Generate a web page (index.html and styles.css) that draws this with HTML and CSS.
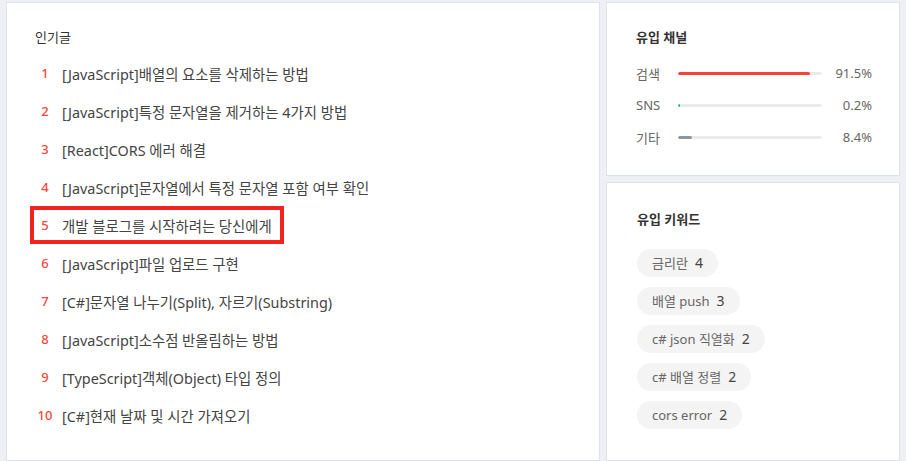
FILE: index.html
```html
<!DOCTYPE html>
<html lang="ko">
<head>
<meta charset="utf-8">
<link rel="stylesheet" href="styles.css">
</head>
<body>
<div class="page">
  <section class="panel popular">
    <h2 class="title">인기글</h2>
    <ol class="posts">
      <li class="post"><span class="rank">1</span><span class="name">[JavaScript]배열의 요소를 삭제하는 방법</span></li>
      <li class="post"><span class="rank">2</span><span class="name">[JavaScript]특정 문자열을 제거하는 4가지 방법</span></li>
      <li class="post"><span class="rank">3</span><span class="name">[React]CORS 에러 해결</span></li>
      <li class="post"><span class="rank">4</span><span class="name">[JavaScript]문자열에서 특정 문자열 포함 여부 확인</span></li>
      <li class="post hl"><span class="rank">5</span><span class="name">개발 블로그를 시작하려는 당신에게</span></li>
      <li class="post"><span class="rank">6</span><span class="name">[JavaScript]파일 업로드 구현</span></li>
      <li class="post"><span class="rank">7</span><span class="name">[C#]문자열 나누기(Split), 자르기(Substring)</span></li>
      <li class="post"><span class="rank">8</span><span class="name">[JavaScript]소수점 반올림하는 방법</span></li>
      <li class="post"><span class="rank">9</span><span class="name">[TypeScript]객체(Object) 타입 정의</span></li>
      <li class="post"><span class="rank">10</span><span class="name">[C#]현재 날짜 및 시간 가져오기</span></li>
    </ol>
  </section>
  <div class="side">
    <section class="panel channels">
      <h2 class="title strong">유입 채널</h2>
      <div class="channel">
        <span class="ch-label">검색</span>
        <div class="track"><div class="fill red" style="width:91.5%"></div></div>
        <span class="ch-value">91.5%</span>
      </div>
      <div class="channel">
        <span class="ch-label">SNS</span>
        <div class="track"><div class="fill teal" style="width:2px"></div></div>
        <span class="ch-value">0.2%</span>
      </div>
      <div class="channel">
        <span class="ch-label">기타</span>
        <div class="track"><div class="fill grey" style="width:9.5%"></div></div>
        <span class="ch-value">8.4%</span>
      </div>
    </section>
    <section class="panel keywords">
      <h2 class="title strong">유입 키워드</h2>
      <ul class="tags">
        <li class="tag">금리란<span class="cnt">4</span></li>
        <li class="tag">배열 push<span class="cnt">3</span></li>
        <li class="tag">c# json 직열화<span class="cnt">2</span></li>
        <li class="tag">c# 배열 정렬<span class="cnt">2</span></li>
        <li class="tag">cors error<span class="cnt">2</span></li>
      </ul>
    </section>
  </div>
</div>
</body>
</html>
```

FILE: styles.css
```css
* { box-sizing: border-box; }
html, body { margin: 0; padding: 0; }
body {
  background: #eef0f5;
  font-family: "Noto Sans", "Noto Sans CJK KR", sans-serif;
  color: #444;
}
.page {
  display: flex;
  gap: 6px;
  height: 461px;
  padding: 2px 6px 0 6px;
}
.panel {
  background: #fff;
  border: 1px solid #dde3ed;
}
.popular {
  width: 594px;
  padding: 24px 0 0 23px;
}
.title {
  margin: 0;
  font-size: 13px;
  font-weight: 400;
  line-height: 20px;
  color: #333;
  padding-left: 5px;
}
.title.strong { font-weight: 700; padding-left: 0; }
.posts {
  list-style: none;
  margin: 7px 0 0 0;
  padding: 0;
}
.post {
  display: flex;
  align-items: center;
  height: 38px;
  width: fit-content;
  padding-right: 12px;
  font-size: 14.4px;
  color: #444;
}
.post.hl {
  box-shadow: inset 0 0 0 4px #f2221f;
}
.rank {
  width: 30px;
  text-align: center;
  color: #f5473b;
  font-size: 13px;
  font-weight: 500;
}
.name { margin-left: 2px; }
.side {
  width: 294px;
  display: flex;
  flex-direction: column;
  gap: 6px;
}
.channels {
  height: 174px;
  padding: 24px 27px 0 29px;
}
.channels .title { margin-bottom: 10px; }
.channel {
  display: flex;
  align-items: center;
  height: 32px;
  font-size: 13px;
  color: #666;
}
.ch-label { width: 42px; }
.track {
  width: 144px;
  height: 3px;
  background: #ebebeb;
  border-radius: 2px;
  overflow: hidden;
}
.fill { height: 100%; border-radius: 2px; }
.fill.red { background: #f5433a; }
.fill.teal { background: #17b99a; }
.fill.grey { background: #8d98a3; }
.ch-value { flex: 1; text-align: right; }
.keywords {
  flex: 1;
  padding: 26px 0 0 30px;
}
.tags {
  list-style: none;
  margin: 20px 0 0 0;
  padding: 0;
  display: flex;
  flex-direction: column;
  align-items: flex-start;
  gap: 10px;
}
.tag {
  height: 28px;
  line-height: 28px;
  padding: 0 15px;
  border-radius: 14px;
  background: #f4f4f4;
  font-size: 13px;
  color: #666;
}
.cnt { margin-left: 7px; color: #444; font-size: 14px; }
```
